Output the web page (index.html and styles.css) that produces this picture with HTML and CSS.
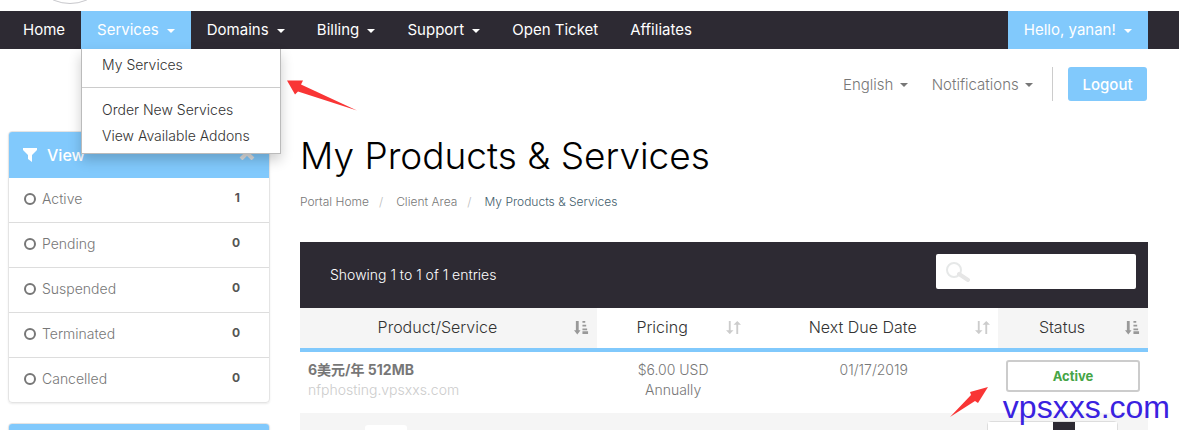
FILE: index.html
```html
<!DOCTYPE html>
<html lang="en">
<head>
  <meta charset="UTF-8" />
  <meta name="viewport" content="width=device-width, initial-scale=1.0"/>
  <title>My Products &amp; Services</title>
  <link rel="stylesheet" href="styles.css">
</head>
<body>

  <svg class="sprite" aria-hidden="true">
    <symbol id="icon-circle" viewBox="0 0 14 14">
      <circle cx="7" cy="7" r="5" fill="none" stroke="currentColor" stroke-width="2" />
    </symbol>
    <symbol id="icon-sort" viewBox="0 0 16 16">
      <path d="M4 1v13M12 2v13" stroke="currentColor" stroke-width="2" />
      <path d="M0 11h8l-4 4zM8 5h8l-4-4z" fill="currentColor" />
    </symbol>
    <symbol id="icon-sorted" viewBox="0 0 16 16">
      <path d="M2 1h3v10h2l-3.5 4.5L0 11h2zM9 1h3v2H9zM9 5h4v2H9zM9 9h5v2H9zM9 12h6v3H9z" fill="currentColor" />
    </symbol>
  </svg>

  <header>
    <div class="logo"></div>
    <nav class="navbar">
      <ul class="menu">
        <li><a href="#">Home</a></li>
        <li class="open">
          <a href="#">Services <span class="caret"></span></a>
          <div class="dropdown">
            <a href="#">My Services</a>
            <hr />
            <a href="#">Order New Services</a>
            <a href="#">View Available Addons</a>
          </div>
        </li>
        <li><a href="#">Domains <span class="caret"></span></a></li>
        <li><a href="#">Billing <span class="caret"></span></a></li>
        <li><a href="#">Support <span class="caret"></span></a></li>
        <li><a href="#">Open Ticket</a></li>
        <li><a href="#">Affiliates</a></li>
      </ul>
      <a class="account" href="#">Hello, yanan! <span class="caret"></span></a>
    </nav>
    <div class="top-links">
      <a href="#">English <span class="caret"></span></a>
      <a href="#">Notifications <span class="caret"></span></a>
      <div class="logout-box">
        <button class="logout">Logout</button>
      </div>
    </div>
  </header>

  <div class="container">
    <aside>
      <div class="panel">
        <div class="panel-heading">
          <svg class="filter" viewBox="0 0 14 14"><path d="M0 0h14v2L9 7v7l-4-3V7L0 2z" fill="#fff" /></svg>
          <h3>View</h3>
          <svg class="chevron" viewBox="0 0 16 10"><path d="M2 9l6-6 6 6" fill="none" stroke="#ddd" stroke-width="4" /></svg>
        </div>
        <a class="item" href="#"><svg><use href="#icon-circle" /></svg>Active<b>1</b></a>
        <a class="item" href="#"><svg><use href="#icon-circle" /></svg>Pending<b>0</b></a>
        <a class="item" href="#"><svg><use href="#icon-circle" /></svg>Suspended<b>0</b></a>
        <a class="item" href="#"><svg><use href="#icon-circle" /></svg>Terminated<b>0</b></a>
        <a class="item" href="#"><svg><use href="#icon-circle" /></svg>Cancelled<b>0</b></a>
      </div>
      <div class="panel">
        <div class="panel-heading"></div>
      </div>
    </aside>

    <main>
      <h1>My Products &amp; Services</h1>
      <ol class="breadcrumb">
        <li><a href="#">Portal Home</a></li>
        <li><a href="#">Client Area</a></li>
        <li class="current">My Products &amp; Services</li>
      </ol>

      <div class="table-bar">
        <span>Showing 1 to 1 of 1 entries</span>
        <div class="search">
          <svg viewBox="0 0 24 20"><circle cx="8" cy="8" r="7" fill="none" stroke="#e6e8e8" stroke-width="2" /><path d="M13 12l9 6" stroke="#e6e6e6" stroke-width="4" stroke-linecap="round" /></svg>
          <input type="text" aria-label="Search" />
        </div>
      </div>

      <table>
        <colgroup>
          <col class="col-product" />
          <col class="col-pricing" />
          <col />
          <col class="col-status" />
        </colgroup>
        <thead>
          <tr>
            <th class="sorted"><div>Product/Service<svg><use href="#icon-sorted" /></svg></div></th>
            <th><div>Pricing<svg><use href="#icon-sort" /></svg></div></th>
            <th><div>Next Due Date<svg><use href="#icon-sort" /></svg></div></th>
            <th class="sorted"><div>Status<svg><use href="#icon-sorted" /></svg></div></th>
          </tr>
        </thead>
        <tbody>
          <tr>
            <td class="product"><strong>6美元/年 512MB</strong><br /><a href="#">nfphosting.vpsxxs.com</a></td>
            <td>$6.00 USD<br />Annually</td>
            <td>01/17/2019</td>
            <td><span class="status">Active</span></td>
          </tr>
        </tbody>
      </table>

      <div class="table-footer">
        <select aria-label="Entries per page"><option></option></select>
        <div class="pages">
          <button aria-label="Previous"></button>
          <button class="active" aria-label="Current page"></button>
          <button aria-label="Next"></button>
        </div>
      </div>
    </main>
  </div>

  <!-- Notes on top of the page -->
  <svg class="arrow arrow-menu" viewBox="0 0 70 30"><path d="M0 0L16 0L14 4L70 30L11 11L8 14z" fill="#f93535" /></svg>
  <svg class="arrow arrow-status" viewBox="0 0 40 30"><path d="M0 30L21 8L20 5L38 0L28 16L25 14z" fill="#f93535" /></svg>
  <div class="watermark">vpsxxs.com</div>

</body>
</html>
```

FILE: styles.css
```css
* {
  box-sizing: border-box;
}

body {
  margin: 0;
  font-family: Inter, 'Noto Sans CJK SC', sans-serif;
  font-size: 14px;
  font-weight: 300;
  color: #777;
  background-color: #fff;
  overflow: hidden;
}

a {
  color: inherit;
  text-decoration: none;
}

b,
strong {
  font-weight: 700;
}

.sprite {
  position: absolute;
  width: 0;
  height: 0;
}

.caret {
  display: inline-block;
  margin-left: 4px;
  vertical-align: middle;
  border-top: 4px solid;
  border-left: 4px solid transparent;
  border-right: 4px solid transparent;
}

.logo {
  position: relative;
  height: 11px;
  overflow: hidden;
}

.logo::after {
  content: "";
  position: absolute;
  left: 28px;
  bottom: 7px;
  width: 82px;
  height: 82px;
  border: 1px solid #c8c8cc;
  border-radius: 50%;
}

.navbar {
  display: flex;
  justify-content: space-between;
  height: 38px;
  padding: 0 31px 0 7px;
  background-color: #2d2a33;
  color: #fff;
  font-size: 15px;
  font-weight: 400;
  line-height: 38px;
}

.menu {
  display: flex;
  margin: 0;
  padding: 0;
  list-style: none;
}

.menu > li {
  position: relative;
}

.menu > li > a,
.account {
  display: block;
  padding: 0 16px;
  white-space: nowrap;
}

.menu > .open > a,
.account {
  background-color: #81c9fc;
}

.dropdown {
  position: absolute;
  top: 100%;
  left: 0;
  z-index: 10;
  width: 200px;
  padding: 3px 0 4px;
  background-color: #fff;
  border: 1px solid #bbb;
  border-top: 0;
  box-shadow: 0 6px 12px rgba(0, 0, 0, 0.2);
  color: #333;
  font-size: 14px;
  font-weight: 300;
  line-height: 26px;
}

.dropdown a {
  display: block;
  padding: 0 20px;
  white-space: nowrap;
}

.dropdown hr {
  margin: 9px 0;
  border: 0;
  border-top: 1px solid #ccc;
}

.top-links {
  display: flex;
  justify-content: flex-end;
  align-items: center;
  gap: 24px;
  height: 70px;
  padding-right: 32px;
  font-size: 15px;
}

.top-links .caret {
  margin-left: 2px;
}

.logout-box {
  margin-left: -5px;
  padding-left: 15px;
  border-left: 1px solid #ccc;
}

.logout {
  display: block;
  width: 79px;
  height: 34px;
  padding: 0;
  background-color: #81c9fc;
  color: #fff;
  border: none;
  border-radius: 3px;
  font-family: inherit;
  font-size: 15px;
  font-weight: 500;
  cursor: pointer;
}

.container {
  display: flex;
  gap: 30px;
  padding: 12px 31px 0 8px;
}

aside {
  flex: 0 0 262px;
}

.panel {
  margin-bottom: 20px;
  border: 1px solid #e4e4e4;
  border-radius: 4px;
  box-shadow: 0 1px 2px rgba(0, 0, 0, 0.08);
}

.panel-heading {
  display: flex;
  align-items: center;
  height: 46px;
  padding: 0 14px;
  background-color: #81c9fc;
  border-radius: 3px 3px 0 0;
  color: #fff;
}

.panel-heading h3 {
  margin: 0;
  font-size: 16px;
  font-weight: 500;
}

.filter {
  width: 14px;
  height: 14px;
  margin-right: 10px;
}

.chevron {
  width: 16px;
  height: 10px;
  margin-left: auto;
}

.item {
  display: flex;
  align-items: center;
  height: 45px;
  padding: 0 29px 3px 14px;
  border-bottom: 1px solid #ddd;
}

.item:last-child {
  height: 44px;
  border-bottom: 0;
}

.item svg {
  width: 14px;
  height: 14px;
  margin-right: 5px;
}

.item b {
  margin-left: auto;
  padding-bottom: 2px;
  color: #555;
  font-size: 12px;
}

main {
  flex: 1;
  min-width: 0;
}

h1 {
  margin: 0;
  color: #000;
  font-size: 37px;
  font-weight: 300;
  line-height: 50px;
}

.breadcrumb {
  display: flex;
  margin: 12px 0 31px;
  padding: 0;
  list-style: none;
  font-size: 12px;
  line-height: 18px;
}

.breadcrumb li + li::before {
  content: "/";
  padding: 0 13px 0 10px;
  color: #bbb;
}

.breadcrumb .current {
  color: #3f5d6b;
}

.table-bar {
  display: flex;
  align-items: center;
  justify-content: space-between;
  height: 66px;
  padding: 0 12px 2px 30px;
  background-color: #2d2a33;
  color: #fff;
}

.search {
  display: flex;
  align-items: center;
  width: 200px;
  height: 35px;
  margin-bottom: 5px;
  padding: 0 10px;
  background-color: #fff;
  border-radius: 2px;
}

.search svg {
  flex: none;
  width: 24px;
  height: 20px;
}

.search input {
  width: 100%;
  border: none;
  outline: none;
  background: none;
}

table {
  width: 100%;
  border-collapse: collapse;
  table-layout: fixed;
  text-align: center;
}

.col-product {
  width: 35%;
}

.col-pricing {
  width: 18%;
}

.col-status {
  width: 150px;
}

th {
  height: 42px;
  padding: 0 8px 2px;
  border-bottom: 4px solid #81c9fc;
  color: #333;
  font-size: 16px;
  font-weight: 300;
}

th div {
  display: flex;
  align-items: center;
  justify-content: center;
  position: relative;
  padding-right: 22px;
}

th svg {
  position: absolute;
  right: 0;
  width: 15px;
  height: 15px;
  color: #ccc;
}

.sorted {
  background-color: #f5f5f5;
}

.sorted svg {
  color: #999;
}

td {
  height: 63px;
  padding: 8px;
  line-height: 20px;
  vertical-align: top;
}

.product {
  text-align: left;
}

.product a {
  color: #ccc;
}

.status {
  display: block;
  border: 2px solid #ccc;
  border-radius: 3px;
  color: #46a546;
  font-size: 13px;
  font-weight: 700;
  line-height: 28px;
}

.table-footer {
  display: flex;
  justify-content: space-between;
  padding: 8px 30px 12px 65px;
  background-color: #f5f5f5;
}

.table-footer select {
  width: 42px;
  height: 34px;
  margin-top: 4px;
  appearance: none;
  background-color: #fff;
  border: none;
  border-radius: 3px;
}

.pages {
  display: flex;
  border: 1px solid #ddd;
  border-radius: 4px;
}

.pages button {
  height: 34px;
  padding: 0;
  background-color: #fff;
  border: none;
}

.pages button:first-child {
  width: 65px;
}

.pages .active {
  width: 22px;
  background-color: #2d2a33;
}

.pages button:last-child {
  width: 42px;
}

/* Notes */
.arrow {
  position: absolute;
  z-index: 20;
}

.arrow-menu {
  top: 80px;
  left: 287px;
  width: 70px;
  height: 31px;
}

.arrow-status {
  top: 387px;
  right: 189px;
  width: 40px;
  height: 30px;
}

.watermark {
  position: absolute;
  top: 389px;
  right: 9px;
  z-index: 20;
  color: #3a22e0;
  font-family: 'Liberation Sans', sans-serif;
  font-size: 32px;
  font-weight: 400;
  line-height: 36px;
}
```
